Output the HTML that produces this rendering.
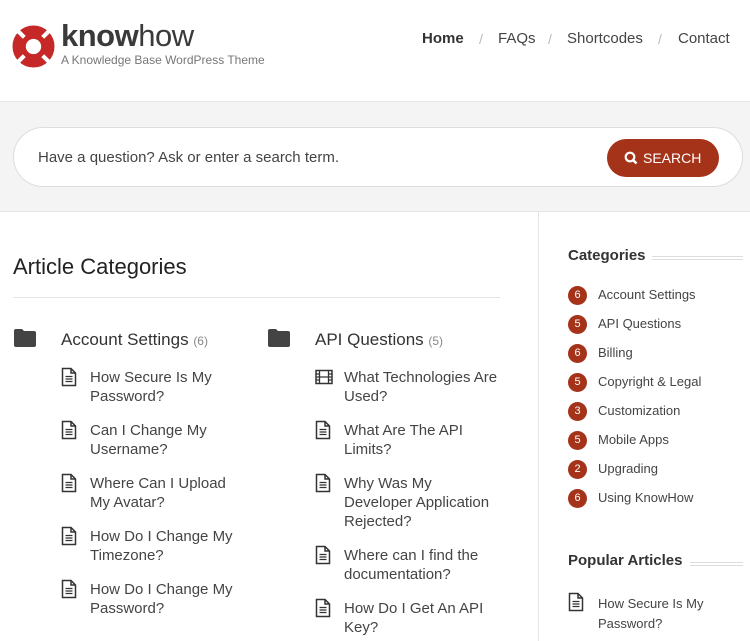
<!DOCTYPE html>
<html><head><meta charset="utf-8"><style>
*{margin:0;padding:0;box-sizing:border-box}
body{width:750px;height:641px;overflow:hidden;background:#fff;font-family:"Liberation Sans",sans-serif;color:#333;position:relative}
.a{position:absolute;white-space:nowrap}
.nav{font-size:15px;color:#444;top:30px}
.sl{color:#bbb;font-size:14px;top:31px}
.ct{font-size:17px;color:#333;top:330px}
.ct span{font-size:12px;color:#888}
.art{font-size:15px;color:#444;line-height:19px;white-space:normal}
.sb{font-size:13px;color:#444}
.bd{width:19px;height:19px;border-radius:50%;background:#a5331a;color:#fff;font-size:11px;text-align:center;line-height:19px}
</style></head><body>
<svg class="a" style="left:12px;top:25px" width="43" height="43" viewBox="0 0 42 42">
<circle cx="21" cy="21" r="14" fill="none" stroke="#c62828" stroke-width="13"/>
<g stroke="#fff" stroke-width="4"><line x1="12" y1="12" x2="6" y2="6"/><line x1="30" y1="12" x2="36" y2="6"/><line x1="12" y1="30" x2="6" y2="36"/><line x1="30" y1="30" x2="36" y2="36"/></g>
</svg>
<div class="a" style="left:61px;top:18px;font-size:31px;color:#3a3a3a;letter-spacing:-0.5px"><b>know</b>how</div>
<div class="a" style="left:61px;top:53px;font-size:12px;color:#777">A Knowledge Base WordPress Theme</div>
<div class="a nav" style="left:422px;font-weight:bold;color:#333">Home</div>
<div class="a sl" style="left:479px">/</div>
<div class="a nav" style="left:498px">FAQs</div>
<div class="a sl" style="left:548px">/</div>
<div class="a nav" style="left:567px">Shortcodes</div>
<div class="a sl" style="left:658px">/</div>
<div class="a nav" style="left:678px">Contact</div>
<div class="a" style="left:0;top:101px;width:750px;height:111px;background:#f4f4f4;border-top:1px solid #e8e8e8;border-bottom:1px solid #e4e4e4"></div>
<div class="a" style="left:13px;top:127px;width:730px;height:60px;background:#fff;border:1px solid #ddd;border-radius:30px"></div>
<div class="a" style="left:38px;top:149px;font-size:15px;color:#444">Have a question? Ask or enter a search term.</div>
<div class="a" style="left:607px;top:139px;width:112px;height:38px;background:#a5331a;border-radius:19px"></div>
<svg class="a" style="left:624px;top:151px" width="14" height="14" viewBox="0 0 14 14"><circle cx="6" cy="6" r="4.3" fill="none" stroke="#fff" stroke-width="2.2"/><line x1="9" y1="9" x2="12.5" y2="12.5" stroke="#fff" stroke-width="2.6"/></svg>
<div class="a" style="left:643px;top:150px;font-size:14px;color:#fff">SEARCH</div>
<div class="a" style="left:538px;top:212px;width:1px;height:429px;background:#e4e4e4"></div>
<div class="a" style="left:13px;top:254px;font-size:22px;color:#222">Article Categories</div>
<div class="a" style="left:13px;top:297px;width:487px;height:1px;background:#e4e4e4"></div>
<svg class="a" style="left:13px;top:328px" width="24" height="20" viewBox="0 0 24 20"><path d="M1 3 Q1 1 3 1 H9 L11 3 H21 Q23 3 23 5 V17 Q23 19 21 19 H3 Q1 19 1 17 Z" fill="#444"/></svg>
<svg class="a" style="left:267px;top:328px" width="24" height="20" viewBox="0 0 24 20"><path d="M1 3 Q1 1 3 1 H9 L11 3 H21 Q23 3 23 5 V17 Q23 19 21 19 H3 Q1 19 1 17 Z" fill="#444"/></svg>
<div class="a ct" style="left:61px">Account Settings <span>(6)</span></div>
<div class="a ct" style="left:315px">API Questions <span>(5)</span></div>
<svg width="0" height="0" style="position:absolute"><defs><symbol id="doc" viewBox="0 0 16 20"><path d="M1.5 1.5 H10 L14.5 6 V18.5 H1.5 Z M10 1.5 V6 H14.5" fill="none" stroke="#333" stroke-width="1.5"/><path d="M4.5 9.5 H11.5 M4.5 12 H11.5 M4.5 14.5 H11.5" stroke="#333" stroke-width="1.2"/></symbol>
<symbol id="film" viewBox="0 0 18 16"><rect x="1" y="1.5" width="16" height="13" fill="none" stroke="#333" stroke-width="1.5"/><path d="M4.5 1.5 V14.5 M13.5 1.5 V14.5 M4.5 8 H13.5 M1 5 H4.5 M1 8 H4.5 M1 11 H4.5 M13.5 5 H17 M13.5 8 H17 M13.5 11 H17" stroke="#333" stroke-width="1.3"/></symbol></defs></svg>
<svg class="a" style="left:61px;top:367px" width="16" height="20"><use href="#doc"/></svg>
<div class="a art" style="left:90px;top:368px;width:160px">How Secure Is My Password?</div>
<svg class="a" style="left:61px;top:420px" width="16" height="20"><use href="#doc"/></svg>
<div class="a art" style="left:90px;top:421px;width:160px">Can I Change My Username?</div>
<svg class="a" style="left:61px;top:473px" width="16" height="20"><use href="#doc"/></svg>
<div class="a art" style="left:90px;top:474px;width:160px">Where Can I Upload My Avatar?</div>
<svg class="a" style="left:61px;top:526px" width="16" height="20"><use href="#doc"/></svg>
<div class="a art" style="left:90px;top:527px;width:160px">How Do I Change My Timezone?</div>
<svg class="a" style="left:61px;top:579px" width="16" height="20"><use href="#doc"/></svg>
<div class="a art" style="left:90px;top:580px;width:160px">How Do I Change My Password?</div>
<svg class="a" style="left:315px;top:369px" width="18" height="16"><use href="#film"/></svg>
<div class="a art" style="left:344px;top:368px;width:156px">What Technologies Are Used?</div>
<svg class="a" style="left:315px;top:420px" width="16" height="20"><use href="#doc"/></svg>
<div class="a art" style="left:344px;top:421px;width:156px">What Are The API Limits?</div>
<svg class="a" style="left:315px;top:473px" width="16" height="20"><use href="#doc"/></svg>
<div class="a art" style="left:344px;top:474px;width:156px">Why Was My Developer Application Rejected?</div>
<svg class="a" style="left:315px;top:545px" width="16" height="20"><use href="#doc"/></svg>
<div class="a art" style="left:344px;top:546px;width:156px">Where can I find the documentation?</div>
<svg class="a" style="left:315px;top:598px" width="16" height="20"><use href="#doc"/></svg>
<div class="a art" style="left:344px;top:599px;width:156px">How Do I Get An API Key?</div>
<div class="a" style="left:568px;top:247px;font-size:15px;color:#333;font-weight:bold">Categories</div>
<div class="a" style="left:652px;top:256px;width:91px;height:4px;border-top:1px solid #ddd;border-bottom:1px solid #ddd"></div>
<div class="a bd" style="left:568px;top:286px">6</div><div class="a sb" style="left:598px;top:287px">Account Settings</div>
<div class="a bd" style="left:568px;top:315px">5</div><div class="a sb" style="left:598px;top:316px">API Questions</div>
<div class="a bd" style="left:568px;top:344px">6</div><div class="a sb" style="left:598px;top:345px">Billing</div>
<div class="a bd" style="left:568px;top:373px">5</div><div class="a sb" style="left:598px;top:374px">Copyright &amp; Legal</div>
<div class="a bd" style="left:568px;top:402px">3</div><div class="a sb" style="left:598px;top:403px">Customization</div>
<div class="a bd" style="left:568px;top:431px">5</div><div class="a sb" style="left:598px;top:432px">Mobile Apps</div>
<div class="a bd" style="left:568px;top:460px">2</div><div class="a sb" style="left:598px;top:461px">Upgrading</div>
<div class="a bd" style="left:568px;top:489px">6</div><div class="a sb" style="left:598px;top:490px">Using KnowHow</div>
<div class="a" style="left:568px;top:552px;font-size:15px;color:#333;font-weight:bold">Popular Articles</div>
<div class="a" style="left:690px;top:562px;width:53px;height:4px;border-top:1px solid #ddd;border-bottom:1px solid #ddd"></div>
<svg class="a" style="left:568px;top:592px" width="16" height="20"><use href="#doc"/></svg>
<div class="a sb" style="left:598px;top:594px;line-height:20px">How Secure Is My<br>Password?</div>
</body></html>
